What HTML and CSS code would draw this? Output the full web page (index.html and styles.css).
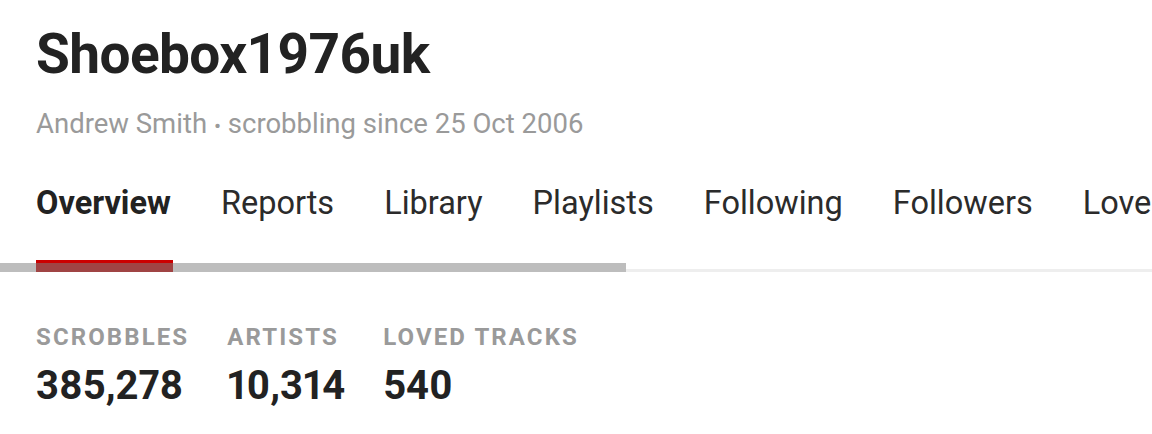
FILE: index.html
```html
<!DOCTYPE html>
<html lang="en">
<head>
<meta charset="utf-8">
<title>Shoebox1976uk</title>
<link rel="stylesheet" href="styles.css">
</head>
<body>
<div class="profile">
  <header class="header">
    <h1 class="username">Shoebox1976uk</h1>
    <p class="meta">Andrew Smith <span class="dot">•</span> scrobbling since 25 Oct 2006</p>
  </header>
  <nav class="tabs">
    <ul class="tab-list">
      <li class="tab active">Overview</li>
      <li class="tab">Reports</li>
      <li class="tab">Library</li>
      <li class="tab">Playlists</li>
      <li class="tab">Following</li>
      <li class="tab">Followers</li>
      <li class="tab">Loved Tracks</li>
    </ul>
    <div class="track">
      <div class="indicator"></div>
      <div class="thumb"></div>
    </div>
  </nav>
  <ul class="stats">
    <li class="stat"><span class="stat-label">Scrobbles</span><span class="stat-value">385,278</span></li>
    <li class="stat"><span class="stat-label">Artists</span><span class="stat-value">10,314</span></li>
    <li class="stat"><span class="stat-label">Loved Tracks</span><span class="stat-value">540</span></li>
  </ul>
</div>
</body>
</html>
```

FILE: styles.css
```css
* { box-sizing: border-box; }
html, body {
  margin: 0;
  padding: 0;
  background: #fff;
}
body {
  font-family: Roboto, "Liberation Sans", sans-serif;
  color: #222;
  overflow: hidden;
  width: 1152px;
  height: 434px;
}
.profile {
  display: flex;
  flex-direction: column;
}
.header {
  padding: 22px 36px 0;
}
.username {
  margin: 0;
  font-size: 55px;
  line-height: 64px;
  font-weight: 700;
  color: #222;
  letter-spacing: -0.6px;
}
.meta {
  margin: 22px 0 0;
  font-size: 27.5px;
  line-height: 32px;
  color: #9a9a9a;
  font-weight: 400;
}
.dot { font-size: 21px; }
.tabs {
  margin-top: 43px;
  overflow: hidden;
}
.tab-list {
  list-style: none;
  margin: 0;
  padding: 0 0 0 36px;
  display: flex;
  gap: 50px;
  white-space: nowrap;
  height: 75px;
}
.tab {
  font-size: 32.5px;
  line-height: 36px;
  color: #2b2b2b;
  font-weight: 400;
  flex: none;
}
.tab.active {
  font-weight: 700;
  color: #222;
}
.track {
  height: 12px;
  display: flex;
  align-items: flex-end;
  border-bottom: 3px solid #eee;
  position: relative;
}
.thumb {
  width: 626px;
  height: 9px;
  margin-bottom: -3px;
  background: #bdbdbd;
  position: relative;
}
.thumb::before {
  content: "";
  position: absolute;
  left: 36px;
  width: 137px;
  top: 0;
  bottom: 0;
  background: #a04444;
}
.indicator {
  position: absolute;
  left: 36px;
  top: 0;
  width: 137px;
  height: 3px;
  background: #c00;
}
.stats {
  list-style: none;
  margin: 51px 0 0;
  padding: 0 36px;
  display: flex;
  gap: 38px;
}
.stat {
  display: flex;
  flex-direction: column;
}
.stat-label {
  font-size: 24px;
  line-height: 28px;
  font-weight: 700;
  color: #9a9a9a;
  text-transform: uppercase;
  letter-spacing: 2.1px;
}
.stat-value {
  font-size: 40px;
  line-height: 46px;
  font-weight: 700;
  color: #222;
  margin-top: 12px;
  font-variant-numeric: proportional-nums;
}
```
